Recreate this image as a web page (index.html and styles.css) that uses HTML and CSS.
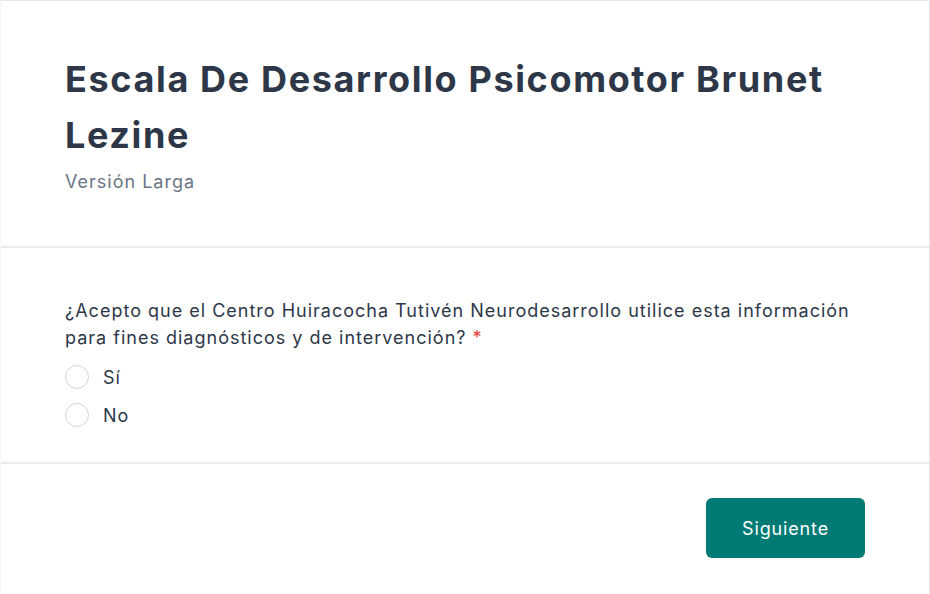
FILE: index.html
```html
<html>

<head>
    <link rel="stylesheet" href="styles.css">
</head>

<body>
    <div class="card">
        <div class="header">
            <h1 class="title">Escala De Desarrollo Psicomotor Brunet Lezine</h1>
            <p class="subtitle">Versión Larga</p>
        </div>

        <div class="question">
            <p class="label">¿Acepto que el Centro Huiracocha Tutivén Neurodesarrollo utilice esta información para fines diagnósticos y de intervención?&nbsp;<span class="req">*</span></p>
            <label class="option"><span class="radio"></span>Sí</label>
            <label class="option"><span class="radio"></span>No</label>
        </div>

        <div class="footer">
            <button class="next">Siguiente</button>
        </div>
    </div>
</body>

</html>
```

FILE: styles.css
```css
body {
    margin: 0;
    background-color: white;
    font-family: Inter, "Liberation Sans", sans-serif;
    font-optical-sizing: none;
    color: #2d3748;
}

.card {
    width: 930px;
    box-sizing: border-box;
    border: 1px solid #e2e8f0;
    border-left-color: #f4f6f8;
    border-bottom: none;
    border-radius: 2px;
    height: 594px;
    letter-spacing: 1px;
}

.header {
    padding: 50px 64px 51px;
    border-bottom: 2px solid #e8ebef;
}

.title {
    margin: 0;
    font-size: 36px;
    line-height: 56px;
    font-weight: 700;
    letter-spacing: 1.64px;
    color: #2d3748;
}

.subtitle {
    margin: 5px 0 0;
    font-size: 18px;
    line-height: 27px;
    color: #6b7587;
}

.question {
    padding: 49px 64px 28px;
    border-bottom: 2px solid #e8ebef;
}

.label {
    margin: 0 0 7px;
    font-size: 18px;
    line-height: 27px;
    color: #2d3748;
}

.req {
    color: #e53e3e;
    letter-spacing: 0;
}

.option {
    display: flex;
    align-items: center;
    gap: 14px;
    height: 38px;
    font-size: 18px;
    color: #2d3748;
}

.radio {
    width: 22px;
    height: 22px;
    border: 1px solid #cbd5e0;
    border-radius: 50%;
}

.footer {
    display: flex;
    justify-content: flex-end;
    padding: 34px 64px;
}

.next {
    height: 60px;
    padding: 0 36px;
    border: none;
    border-radius: 6px;
    background-color: #007a74;
    color: white;
    font-family: inherit;
    font-optical-sizing: none;
    letter-spacing: 0.85px;
    font-size: 18px;
    cursor: pointer;
}
```
